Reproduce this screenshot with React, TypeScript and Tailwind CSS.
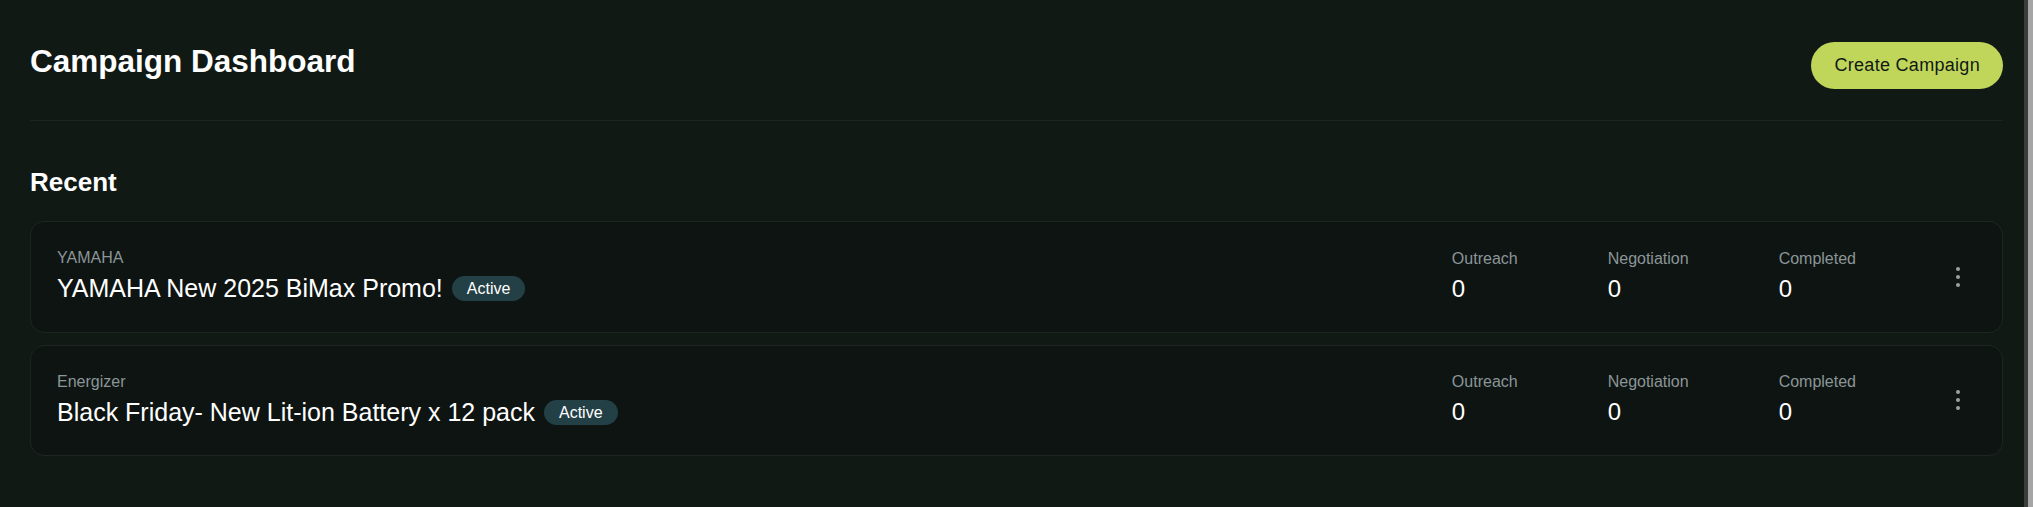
import React from 'react';

const campaigns = [
  { brand: 'YAMAHA', title: 'YAMAHA New 2025 BiMax Promo!', status: 'Active', outreach: 0, negotiation: 0, completed: 0 },
  { brand: 'Energizer', title: 'Black Friday- New Lit-ion Battery x 12 pack', status: 'Active', outreach: 0, negotiation: 0, completed: 0 },
];

const DotsIcon = () => (
  <svg width="8" height="24" viewBox="0 0 8 24" fill="#9ba1a2">
    <circle cx="4" cy="4" r="2" />
    <circle cx="4" cy="12" r="2" />
    <circle cx="4" cy="20" r="2" />
  </svg>
);

const Stat = ({ label, value }: { label: string; value: number }) => (
  <div className="flex flex-col">
    <span className="text-[16px] leading-[24px] text-[#8b9699]">{label}</span>
    <span className="text-[24px] leading-[36px] text-white">{value}</span>
  </div>
);

const CampaignCard = ({ c }: { c: (typeof campaigns)[number] }) => (
  <div className="flex items-center justify-between rounded-[14px] border border-[#1d2621] bg-[#0e1411] py-6 pl-[26px] pr-6">
    <div className="flex flex-col">
      <span className="text-[16px] leading-[24px] text-[#8b9699]">{c.brand}</span>
      <div className="flex items-center gap-[9px]">
        <span className="text-[25px] leading-[37.5px] text-white">{c.title}</span>
        <span className="rounded-full bg-[#234047] px-[15px] text-[16px] leading-[25px] text-white">{c.status}</span>
      </div>
    </div>
    <div className="flex items-center">
      <div className="flex gap-[90px]">
        <Stat label="Outreach" value={c.outreach} />
        <Stat label="Negotiation" value={c.negotiation} />
        <Stat label="Completed" value={c.completed} />
      </div>
      <button type="button" className="ml-[82px] flex h-10 w-10 items-center justify-center">
        <DotsIcon />
      </button>
    </div>
  </div>
);

export default function App() {
  return (
    <div className="flex h-[507px] w-full overflow-hidden bg-[#111915] font-['Liberation_Sans',Arial,sans-serif]">
      <main className="flex-1 pl-[30px] pr-[21px] pt-[42px]">
        <header className="flex items-start justify-between border-b border-[#1c2520] pb-[31px]">
          <h1 className="mt-[1px] text-[31.5px] font-bold leading-[37px] text-white">Campaign Dashboard</h1>
          <button
            type="button"
            className="h-[47px] rounded-full bg-[#bfd65b] px-[23px] text-[18px] tracking-[0.3px] text-[#111915]"
          >
            Create Campaign
          </button>
        </header>
        <section className="mt-[46px]">
          <h2 className="mb-6 text-[26px] font-bold leading-[30px] text-white">Recent</h2>
          <div className="flex flex-col gap-3">
            {campaigns.map((c) => (
              <CampaignCard key={c.brand} c={c} />
            ))}
          </div>
        </section>
      </main>
      <div className="flex w-[9px] shrink-0">
        <div className="w-[4px] bg-[#3b3b3b]" />
        <div className="w-[5px] bg-[#a5a5a5]" />
      </div>
    </div>
  );
}
